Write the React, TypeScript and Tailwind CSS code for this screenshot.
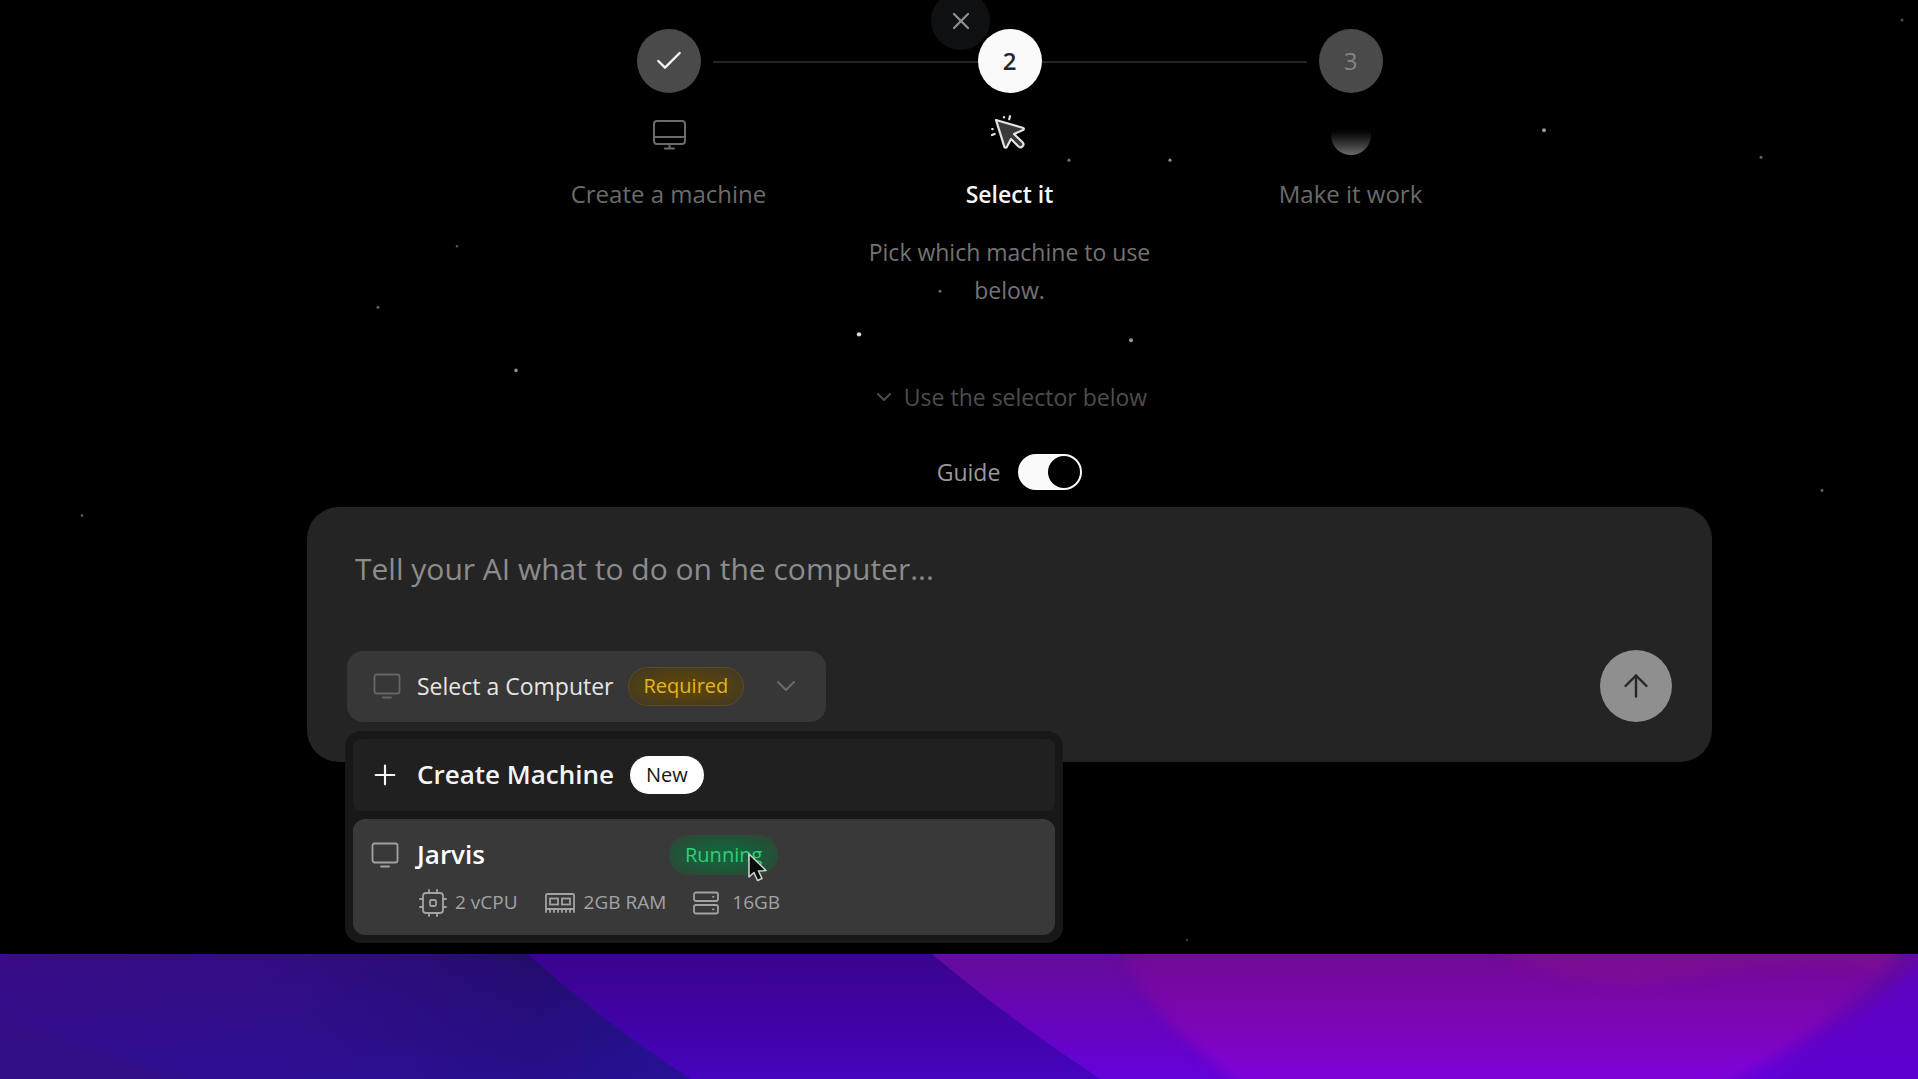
import { useState } from "react";
import { ArrowUp, Check, ChevronDown, Plus, X } from "lucide-react";

const STARS = [
  { x: 1544, y: 130, r: 2, o: 0.6 },
  { x: 1761, y: 157, r: 1.5, o: 0.4 },
  { x: 1902, y: 20, r: 1.5, o: 0.3 },
  { x: 457, y: 246, r: 1.2, o: 0.35 },
  { x: 378, y: 307, r: 1.6, o: 0.35 },
  { x: 516, y: 370, r: 1.8, o: 0.55 },
  { x: 859, y: 334, r: 2.2, o: 0.85 },
  { x: 1131, y: 340, r: 2, o: 0.6 },
  { x: 940, y: 291, r: 1.4, o: 0.45 },
  { x: 1069, y: 160, r: 1.6, o: 0.45 },
  { x: 1170, y: 160, r: 1.6, o: 0.55 },
  { x: 82, y: 515, r: 1.4, o: 0.35 },
  { x: 1822, y: 490, r: 1.4, o: 0.4 },
  { x: 1187, y: 939, r: 1.2, o: 0.25 },
];

function Stars() {
  return (
    <svg className="pointer-events-none absolute inset-0 h-full w-full" viewBox="0 0 1918 953" preserveAspectRatio="none" aria-hidden="true">
      {STARS.map((s) => (
        <circle key={`${s.x}-${s.y}`} cx={s.x} cy={s.y} r={s.r} fill="#fff" opacity={s.o} />
      ))}
    </svg>
  );
}

function DesktopIcon() {
  return (
    <svg className="h-8 w-9" viewBox="0 0 36 32" fill="none" stroke="currentColor" strokeWidth="2" strokeLinecap="round" aria-hidden="true">
      <rect x="3" y="2" width="31" height="23" rx="3" />
      <path d="M3 18h31M18.500 25v4M14 29.500h9" />
    </svg>
  );
}

function ClickIcon() {
  return (
    <svg className="h-10 w-10" viewBox="0 0 40 40" fill="none" stroke="currentColor" strokeWidth="2.200" strokeLinecap="round" strokeLinejoin="round" aria-hidden="true">
      <path d="M6 5 32.800 12.800c1.300.4 1.400 1.800.2 2.300L24 19l8.500 8.300c2.600 2.600-1.200 6.800-4 4.200L21 24l-4.200 8c-.6 1.100-2 1-2.400-.2z" fill="#3a3a3a" />
      <path d="M14 2v.4M20 1.200l-.8 3M2.200 14.200h.4M2 20l2.600-1" />
    </svg>
  );
}

function MonitorIcon({ className }: { className?: string }) {
  return (
    <svg className={className} viewBox="0 0 28 26" fill="none" stroke="currentColor" strokeWidth="1.800" strokeLinecap="round" aria-hidden="true">
      <rect x="1.500" y="1.500" width="25" height="19" rx="2" />
      <path d="M10 24.500h8" />
    </svg>
  );
}

function CpuIcon() {
  return (
    <svg className="h-7 w-7" viewBox="0 0 28 28" fill="none" stroke="currentColor" strokeWidth="1.800" strokeLinecap="round" aria-hidden="true">
      <rect x="4" y="4" width="20" height="20" rx="3" />
      <rect x="11" y="11" width="6" height="6" rx="1.500" />
      <path d="M10 1v3M18 1v3M10 24v3M18 24v3M1 10h3M1 18h3M24 10h3M24 18h3" />
    </svg>
  );
}

function RamIcon() {
  return (
    <svg className="h-6 w-8" viewBox="0 0 32 24" fill="none" stroke="currentColor" strokeWidth="1.800" strokeLinecap="round" aria-hidden="true">
      <path d="M2 21V4.500A1.500 1.500 0 0 1 3.500 3h25A1.500 1.500 0 0 1 30 4.500V21M2 18h28" />
      <rect x="6" y="7.500" width="8" height="6" />
      <rect x="18" y="7.500" width="8" height="6" />
      <path d="M6 18v3M10 18v3M14 18v3M18 18v3M22 18v3M26 18v3" />
    </svg>
  );
}

function DiskIcon() {
  return (
    <svg className="h-6 w-7" viewBox="0 0 28 24" fill="none" stroke="currentColor" strokeWidth="1.800" strokeLinecap="round" aria-hidden="true">
      <rect x="2" y="1.500" width="24" height="8.500" rx="2" />
      <rect x="2" y="14" width="24" height="8.500" rx="2" />
      <path d="M21 5.800h.5M21 18.300h.5" />
    </svg>
  );
}

function Pointer() {
  return (
    <svg className="pointer-events-none absolute top-[17px] left-[78px] h-8 w-6" viewBox="0 0 24 32" aria-hidden="true">
      <path d="M2 2v23l5-4.500 3.500 8 4.500-2-3.500-7.500 7.500-.5z" fill="#0a0a0a" stroke="#d4d4d4" strokeWidth="1.500" strokeLinejoin="round" />
    </svg>
  );
}

function Wallpaper() {
  return (
    <svg className="absolute inset-0 h-full w-full" viewBox="0 0 1918 126" preserveAspectRatio="none" aria-hidden="true">
      <defs>
        <linearGradient id="left" x1="0" y1="0" x2="1" y2="0">
          <stop offset="0" stopColor="#390c84" />
          <stop offset="0.15" stopColor="#320d80" />
          <stop offset="0.28" stopColor="#230c6c" />
          <stop offset="0.36" stopColor="#221284" />
        </linearGradient>
        <linearGradient id="leftGlow" x1="0" y1="0" x2="0" y2="1">
          <stop offset="0" stopColor="#2a10a0" stopOpacity="0" />
          <stop offset="1" stopColor="#2a10a0" stopOpacity="0.6" />
        </linearGradient>
        <linearGradient id="middle" x1="0" y1="0" x2="0" y2="1">
          <stop offset="0" stopColor="#3a038c" />
          <stop offset="1" stopColor="#4604bd" />
        </linearGradient>
        <linearGradient id="right" x1="0" y1="0" x2="0" y2="1">
          <stop offset="0" stopColor="#650c98" />
          <stop offset="0.6" stopColor="#6604c0" />
          <stop offset="1" stopColor="#6402dc" />
        </linearGradient>
        <linearGradient id="disc" x1="0" y1="0" x2="0" y2="126" gradientUnits="userSpaceOnUse">
          <stop offset="0" stopColor="#720a96" />
          <stop offset="0.6" stopColor="#7d05b8" />
          <stop offset="1" stopColor="#8002dc" />
        </linearGradient>
        <filter id="soft" filterUnits="userSpaceOnUse" x="-100" y="-100" width="2118" height="326" colorInterpolationFilters="sRGB">
          <feGaussianBlur stdDeviation="6" />
        </filter>
      </defs>
      <rect width="1918" height="126" fill="url(#left)" />
      <rect width="700" height="126" fill="url(#leftGlow)" />
      <path d="M-40 50 210 136H-40z" fill="#34107c" opacity="0.6" filter="url(#soft)" />
      <path d="M528 0Q600 66 692 126H1918V0z" fill="url(#middle)" />
      <path d="M932 0Q1010 66 1102 126H1918V0z" fill="url(#right)" />
      <path d="M1105-50Q1130 70 1290 160H1650Q1850 90 1930-50z" fill="url(#disc)" filter="url(#soft)" />
      <path d="M1440-50Q1540 50 1680 25T1880 20L1930-50z" fill="#7e1090" opacity="0.6" filter="url(#soft)" />
      <path d="M1960-30Q1860 70 1720 160H1960z" fill="#5c00cc" opacity="0.7" filter="url(#soft)" />
    </svg>
  );
}

function Steps() {
  return (
    <ol className="grid w-full max-w-[1023px] grid-cols-3 text-center text-2xl text-[#6b6b6b]">
      <li className="relative flex flex-col items-center">
        <div className="absolute top-8 left-1/2 ml-[44px] h-[2px] w-[calc(100%-76px)] bg-[#242424]" />
        <div className="flex size-16 items-center justify-center rounded-full bg-[#4a4a4a] text-neutral-100">
          <Check className="size-8" strokeWidth={1.8} />
        </div>
        <div className="mt-[22px] flex h-10 items-center">
          <DesktopIcon />
        </div>
        <h3 className="mt-[19px] leading-10">Create a machine</h3>
      </li>
      <li className="relative flex flex-col items-center">
        <div className="absolute top-8 left-1/2 ml-8 h-[2px] w-[calc(100%-76px)] bg-[#242424]" />
        <div className="relative z-10 flex size-16 items-center justify-center rounded-full bg-[#fafafa] font-semibold text-[#262626]">2</div>
        <div className="mt-[22px] flex h-10 items-center text-neutral-200">
          <ClickIcon />
        </div>
        <h3 className="mt-[19px] text-[23px] leading-10 font-semibold text-neutral-100">Select it</h3>
        <p className="mt-[19px] w-72 text-[23px] leading-[38px] text-[#737373]">Pick which machine to use below.</p>
      </li>
      <li className="flex flex-col items-center">
        <div className="flex size-16 items-center justify-center rounded-full bg-[#4a4a4a] text-[#858585]">3</div>
        <div className="mt-[22px] flex h-10 items-center">
          <div className="size-10 rounded-full bg-linear-to-b from-black from-25% to-[#6b6b6b]" />
        </div>
        <h3 className="mt-[19px] leading-10">Make it work</h3>
      </li>
    </ol>
  );
}

function MachineMenu() {
  return (
    <div role="menu" className="absolute top-20 -left-[2px] z-20 flex w-[718px] flex-col gap-2 rounded-2xl bg-[#181818] p-2">
      <button role="menuitem" type="button" className="flex h-[72px] items-center rounded-lg bg-[#202020] px-4 text-neutral-100">
        <Plus className="size-8" strokeWidth={1.6} />
        <span className="ml-4 text-[26px] font-semibold">Create Machine</span>
        <span className="ml-4 flex h-[38px] items-center rounded-full bg-white px-4 text-xl text-[#171717]">New</span>
      </button>
      <button role="menuitem" type="button" className="flex h-[116px] flex-col rounded-xl bg-[#393939] px-[18px] pt-[14px] text-left">
        <span className="flex h-11 items-center">
          <MonitorIcon className="h-[26px] w-7 text-neutral-400" />
          <span className="ml-[18px] w-[252px] text-[26px] font-semibold text-white">Jarvis</span>
          <span className="relative flex h-10 items-center rounded-full bg-[radial-gradient(ellipse,#16603a_30%,#2a4a37_80%)] px-4 text-xl text-[#2fce7c]">
            Running
            <Pointer />
          </span>
        </span>
        <span className="ml-12 flex h-12 items-center gap-[26px] pt-1 text-[19px] text-[#a3a3a3]">
          <span className="flex items-center gap-2"><CpuIcon />2 vCPU</span>
          <span className="flex items-center gap-2"><RamIcon />2GB RAM</span>
          <span className="flex items-center gap-3"><DiskIcon />16GB</span>
        </span>
      </button>
    </div>
  );
}

export default function App() {
  const [guide, setGuide] = useState(true);
  const [open, setOpen] = useState(true);

  return (
    <div className="flex min-h-screen flex-col overflow-x-hidden bg-black font-['Open_Sans',sans-serif]">
      <main className="relative flex flex-col items-center bg-black pt-[29px] pb-[192px] pl-[101px]">
        <Stars />
        <button type="button" aria-label="Close" className="absolute -top-[9px] left-1/2 flex size-[59px] -translate-x-7 items-center justify-center rounded-full bg-[#0f1012] text-[#8c8c8c]">
          <X className="size-7" strokeWidth={2} />
        </button>

        <Steps />

        <div className="mt-[72px] flex h-8 items-center gap-2 text-[23px] text-[#4d4d4d]">
          <ChevronDown className="size-6" strokeWidth={2} />
          <span>Use the selector below</span>
        </div>

        <div className="mt-[41px] flex h-9 items-center gap-[18px]">
          <label htmlFor="guide" className="text-[23px] text-[#9a9a9a]">Guide</label>
          <input
            id="guide"
            type="checkbox"
            role="switch"
            checked={guide}
            onChange={(e) => setGuide(e.target.checked)}
            className="h-9 w-16 appearance-none rounded-full bg-[#404040] p-[2px] before:block before:size-8 before:rounded-full before:bg-black checked:bg-[#fafafa] checked:before:ml-7"
          />
        </div>

        <form className="relative mt-[17px] w-full max-w-[1405px] rounded-[32px] bg-[#242424] p-10" onSubmit={(e) => e.preventDefault()}>
          <textarea
            aria-label="Task"
            placeholder="Tell your AI what to do on the computer..."
            className="block h-[103px] w-full resize-none px-2 text-3xl leading-[44px] text-white outline-none placeholder:text-[#8c8c8c]"
          />
          <div className="flex items-center justify-between">
            <div className="relative">
              <button
                type="button"
                aria-haspopup="menu"
                aria-expanded={open}
                onClick={() => setOpen(!open)}
                className="flex h-[71px] w-[479px] items-center rounded-2xl bg-[#373737] pr-6 pl-[26px] whitespace-nowrap"
              >
                <MonitorIcon className="h-[26px] w-7 text-[#666]" />
                <span className="ml-4 text-[23px] text-neutral-200">Select a Computer</span>
                <span className="ml-[14px] flex h-[39px] items-center rounded-full border border-[#5c4a20] bg-[radial-gradient(ellipse,#5a430a_30%,#443a22_85%)] px-[15px] text-xl text-[#e6b422]">Required</span>
                <ChevronDown className="ml-auto size-8 text-[#6b6b6b]" strokeWidth={1.5} />
              </button>
              {open && <MachineMenu />}
            </div>
            <button type="submit" aria-label="Send" className="flex size-[72px] items-center justify-center rounded-full bg-[#8f8f8f] text-[#262626]">
              <ArrowUp className="size-9" strokeWidth={1.6} />
            </button>
          </div>
        </form>
      </main>
      <footer className="relative min-h-[126px] flex-1">
        <Wallpaper />
      </footer>
    </div>
  );
}
